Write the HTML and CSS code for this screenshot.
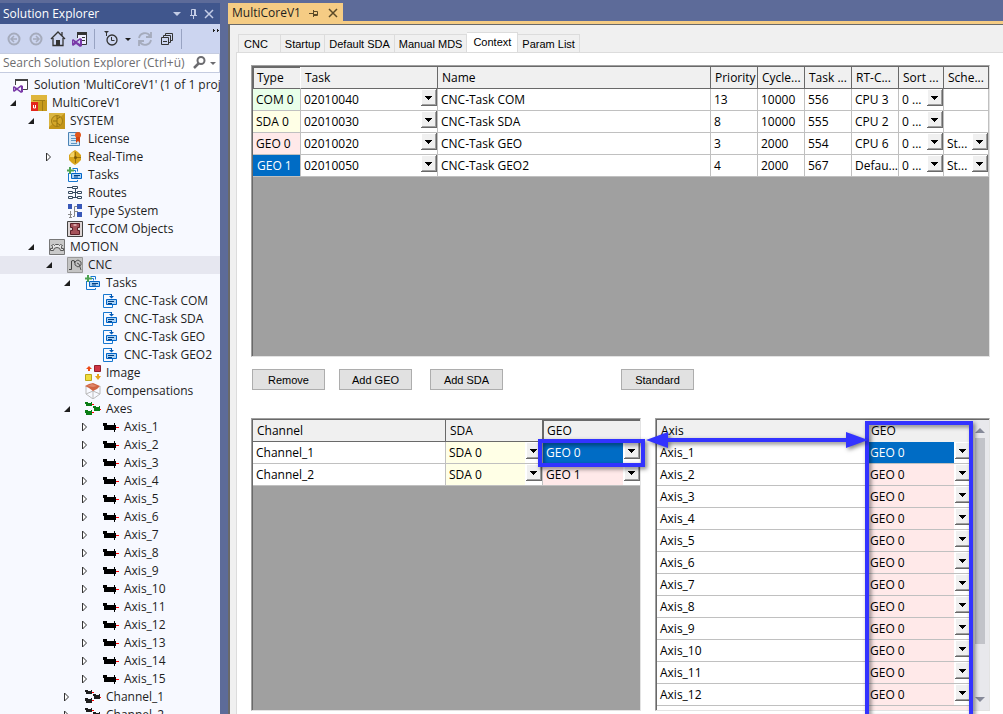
FILE: index.html
```html
<!DOCTYPE html>
<html lang="en">
<head>
<meta charset="utf-8">
<title>MultiCoreV1</title>
<link rel="stylesheet" href="styles.css">
</head>
<body>
<svg class="defs" aria-hidden="true">
  <symbol id="solution" viewBox="0 0 16 16"><path d="M2.500 8V2.500h12v10H9" fill="#fff" stroke="#424242"/><path d="M2 2h13v2H2z" fill="#424242"/><path d="M1 9l3 2 4-3 2 1v6l-2 1-4-3-3 2-1-1v-4zM5 12l3 2v-4zM1 11v2l1-1z" fill="#7a3aa8" fill-rule="evenodd"/></symbol>
  <symbol id="project" viewBox="0 0 16 16"><path d="M0 0h16v16H0z" fill="#c79a1c"/><path d="M0 0h16v5L0 8z" fill="#dfb63c"/><path d="M2 5.500h12M11.500 6v10" stroke="#a07c14"/><path d="M0 7h7v9H0z" fill="#e4251b"/><path d="M2.500 10v3h2v-3" fill="none" stroke="#fff"/></symbol>
  <symbol id="system" viewBox="0 0 16 16"><path d="M0 0h16v16H0z" fill="#c3951a"/><path d="M0 0h16L0 14z" fill="#dbb540"/><circle cx="8" cy="8" r="5.500" fill="#d4a72a" stroke="#a07c14"/><path d="M8 3v10M8 8H4M8 6l3-2M8 10l3 2" stroke="#91700f"/></symbol>
  <symbol id="license" viewBox="0 0 16 16"><path d="M1.500 1.500h11v13h-11z" fill="#d5e8f7" stroke="#4b83b5"/><path d="M4 4.500h4M4 7.500h5M4 9.500h6M4 12.500h6" stroke="#5f96c4"/><circle cx="11" cy="4" r="3" fill="#e2561b"/><path d="M9 6h4v6l-2-2-2 2z" fill="#d24411"/></symbol>
  <symbol id="realtime" viewBox="0 0 16 16"><path d="M5 3l3-2 3 2 3 3v5l-3 3-3 2-3-2-3-3V6z" fill="#d8a51d"/><path d="M8.500 3v11M8 8.500h6" stroke="#9b720b"/><path d="M3 8a5 5 0 0 1 4-5v5z" fill="#f3d36a"/><circle cx="8.500" cy="8.500" r="1.500" fill="#7a5908"/></symbol>
  <symbol id="tasks" viewBox="0 0 16 16"><path d="M5.500 1.500h5v3M1.500 6v8.500h9V13" fill="none" stroke="#1878d0"/><path d="M3.500 3.500h5v2" fill="none" stroke="#1878d0"/><path d="M4.500 6.500h10v5h-10z" fill="#a9d1f5" stroke="#0065c8"/><path d="M7 8.500h6M7 10h4" stroke="#003f83"/><path d="M3 0v7M0 3.500h7" stroke="#4ca352" stroke-width="2"/></symbol>
  <symbol id="task" viewBox="0 0 16 16"><path d="M6 1.500H.5v13h9V12M6 1.500h3" fill="none" stroke="#1878d0"/><path d="M3.500 6.500h10v5h-10z" fill="#a9d1f5" stroke="#0065c8"/><path d="M5 8.500h6M5 10.500h4" stroke="#003f83"/><path d="M6 3h5L8.500 5.500zM8 1h1v3H8z" fill="#0058b5"/></symbol>
  <symbol id="routes" viewBox="0 0 16 16"><path d="M5.500 1.500h5v2h-5zM1.500 6.500h4v2h-4zM10.500 6.500h4v2h-4zM1.500 11.500h4v2h-4zM10.500 11.500h4v2h-4z" fill="#fff" stroke="#34495e"/><path d="M8.500 4v9M6 7.500h5M6 12.500h5M0 2.500h5" stroke="#34495e" fill="none"/></symbol>
  <symbol id="types" viewBox="0 0 16 16"><path d="M1 1h4v5H1zM10 1h5v5h-5zM10 9h5v5h-5z" fill="#3858b8"/><path d="M10 3.500H7.500v10H6M8 8.500h3M3.500 8v6M1 11.500h4M2 14.500h3" stroke="#888" fill="none"/></symbol>
  <symbol id="tccom" viewBox="0 0 16 16"><path d="M.5.5h15v15H.5z" fill="#ddd5d5" stroke="#444"/><path d="M3.500 2.500h9v4h-2v3h2v4h-9v-4h2v-3h-2z" fill="#a5525a" stroke="#5a1f27"/><path d="M6.500 3v2h3V3" fill="#d9a6a9"/></symbol>
  <symbol id="motion" viewBox="0 0 16 16"><path d="M.5.5h15v15H.5z" fill="#c9c9c9" stroke="#777"/><path d="M1.500 11.500v-2h2v-2l-1-1 2-1 1 1 1-1h3l1 1 1-1 2 1-1 1v2h2v2h-3a3.500 3 0 0 0-7 0z" fill="#e5e5e5" stroke="#555"/></symbol>
  <symbol id="cnc" viewBox="0 0 16 16"><path d="M.5.5h15v15H.5z" fill="#c4c4c4" stroke="#999"/><path d="M2 12.500h2.500V4L6 3.500 7.500 4v2" fill="none" stroke="#444"/><path d="M9 4l2-1 3 2v3l-3 2-3-2V5zM10 6l2 1 2 6" fill="none" stroke="#555"/></symbol>
  <symbol id="image" viewBox="0 0 16 16"><path d="M4 1l3 3H5v2H3V4H1z" fill="#ed4a16"/><path d="M9.500.5h6v6h-6z" fill="#cf3444" stroke="#93202c"/><path d="M.5 9.500h6v6h-6z" fill="#f0dc3c" stroke="#bda619"/><path d="M12 9h2v2h2l-3 4-3-4h2z" fill="#e8a21c"/></symbol>
  <symbol id="comp" viewBox="0 0 16 16"><path d="M1 3v8l7 5 7-5V3M8 8v8M1 11l7-3 7 3" fill="none" stroke="#bbb"/><path d="M0 3l4-2 4-1 7 3-3 3-4 2-4-3z" fill="#cf6443"/><path d="M2 3l5-2 5 2-4 1z" fill="#e0886c"/></symbol>
  <symbol id="motors" viewBox="0 0 16 16"><g shape-rendering="crispEdges"><path d="M0 1h3v1h3V1h1v4H1V3H0zM0 9h3v1h3V9h1v5H1v-2H0zM8 5h3v1h3V5h1v5H9V7H8z" fill="currentColor"/><path d="M7 3h2v1H7zM7 11h2v1H7zM15 8h1v1h-1z" fill="red"/></g></symbol>
  <symbol id="axis" viewBox="0 0 16 16"><g shape-rendering="crispEdges"><path d="M0 4h4v2h7V4h1v2h1v5h-1v2h-1v-2H1V7H0z" fill="#000"/><path d="M13 8h3v1h-3z" fill="red"/></g></symbol>
  <symbol id="open" viewBox="0 0 10 10"><path d="M8 2v6H2z" fill="#1e1e1e"/></symbol>
  <symbol id="closed" viewBox="0 0 10 10"><path d="M2.500 1v8l4-4z" fill="#fff" stroke="#333"/></symbol>
  <symbol id="pin" viewBox="0 0 12 12"><path d="M3 7.500h7M4.500 7V1.500h4V7M7.500 1v6M6.500 7v4" fill="none" stroke="currentColor"/></symbol>
  <symbol id="cross" viewBox="0 0 12 12"><path d="M2 2l8 8M10 2l-8 8" stroke="currentColor" stroke-width="1.500"/></symbol>
</svg>
<aside class="explorer">
  <header class="titlebar"><h1>Solution Explorer</h1>
    <button aria-label="Window options"><svg viewBox="0 0 12 12"><path d="M2 4h8L6 8z" fill="currentColor"/></svg></button>
    <button aria-label="Auto hide"><svg><use href="#pin"/></svg></button>
    <button aria-label="Close explorer"><svg><use href="#cross"/></svg></button>
  </header>
  <div class="toolbar">
    <button aria-label="Back"><svg viewBox="0 0 16 16"><circle cx="8" cy="8" r="5.500" fill="none" stroke="#a5abbc" stroke-width="2"/><path d="M11 8H5M8 5L5 8l3 3" fill="none" stroke="#a5abbc" stroke-width="1.500"/></svg></button>
    <button aria-label="Forward"><svg viewBox="0 0 16 16"><circle cx="8" cy="8" r="5.500" fill="none" stroke="#a5abbc" stroke-width="2"/><path d="M5 8h6M8 5l3 3-3 3" fill="none" stroke="#a5abbc" stroke-width="1.500"/></svg></button>
    <button aria-label="Home"><svg viewBox="0 0 16 16"><path d="M1 8l7-7 7 7M3 7v7.500h10V7M12 5V1" fill="none" stroke="#333" stroke-width="1.300"/><path d="M6 9h4v6H6z" fill="#333"/></svg></button>
    <button aria-label="Switch views"><svg viewBox="0 0 16 16"><path d="M5.500 7V1.500h9v12H10" fill="#eef" stroke="#333"/><path d="M5 1h10v3H5zM10 6h3v1h-3zM10 9h3v1h-3z" fill="#333"/><path d="M1 8l3 2 4-3 2 1v7l-2 1-4-3-3 2-1-1V9zM5 11l3 2V9zM1 10v2l1-1z" fill="#7a3aa8" fill-rule="evenodd"/></svg></button>
    <i class="sep"></i>
    <button class="filter" aria-label="Pending changes filter"><svg viewBox="0 0 16 16"><circle cx="9" cy="9" r="5" fill="none" stroke="#333" stroke-width="1.300"/><path d="M8.500 6v3.500h3" fill="none" stroke="#333"/><path d="M1 0h5L4 2v3H3V2z" fill="#333"/></svg></button>
    <button class="slim" aria-label="Filter options"><svg viewBox="0 0 6 16"><path d="M0 7h6L3 10z" fill="#1e1e1e"/></svg></button>
    <button aria-label="Sync"><svg viewBox="0 0 16 16"><path d="M2 7a6 6 0 0 1 11-2M14 9a6 6 0 0 1-11 2M14 1v5H9M2 15v-5h5" fill="none" stroke="#a5abbc" stroke-width="1.800"/></svg></button>
    <button aria-label="Collapse all"><svg viewBox="0 0 16 16"><path d="M2.500 6.500h7v7h-7zM4 10.500h4M4.500 6V4.500h7v7H10M6.500 4V2.500h7v7H12" fill="none" stroke="#333"/></svg></button>
    <i class="sep"></i>
    <button class="more" aria-label="More tools"><svg viewBox="0 0 8 16"><path d="M1 1h1v3H1zM5 1h1v3H5zM2 2h1v1H2zM6 2h1v1H6z" fill="#1e1e1e"/></svg></button>
  </div>
  <div class="search"><input type="text" aria-label="Search Solution Explorer" placeholder="Search Solution Explorer (Ctrl+ü)">
    <button aria-label="Search"><svg viewBox="0 0 16 16"><circle cx="10" cy="5.500" r="3.500" fill="none" stroke="#6c6c70" stroke-width="2"/><path d="M7.500 8.500L3 13" stroke="#6c6c70" stroke-width="2.500"/></svg></button>
    <button class="slim" aria-label="Search options"><svg viewBox="0 0 6 16"><path d="M0 7h6L3 10z" fill="#6c6c70"/></svg></button>
  </div>
  <ul class="tree">
    <li class="root"><svg class="ico"><use href="#solution"/></svg>Solution 'MultiCoreV1' (1 of 1 project)</li>
    <li class="l1"><svg class="exp"><use href="#open"/></svg><svg class="ico"><use href="#project"/></svg>MultiCoreV1</li>
    <li class="l2"><svg class="exp"><use href="#open"/></svg><svg class="ico"><use href="#system"/></svg>SYSTEM</li>
    <li class="l3"><i class="exp"></i><svg class="ico"><use href="#license"/></svg>License</li>
    <li class="l3"><svg class="exp"><use href="#closed"/></svg><svg class="ico"><use href="#realtime"/></svg>Real-Time</li>
    <li class="l3"><i class="exp"></i><svg class="ico"><use href="#tasks"/></svg>Tasks</li>
    <li class="l3"><i class="exp"></i><svg class="ico"><use href="#routes"/></svg>Routes</li>
    <li class="l3"><i class="exp"></i><svg class="ico"><use href="#types"/></svg>Type System</li>
    <li class="l3"><i class="exp"></i><svg class="ico"><use href="#tccom"/></svg>TcCOM Objects</li>
    <li class="l2"><svg class="exp"><use href="#open"/></svg><svg class="ico"><use href="#motion"/></svg>MOTION</li>
    <li class="l3 current"><svg class="exp"><use href="#open"/></svg><svg class="ico"><use href="#cnc"/></svg>CNC</li>
    <li class="l4"><svg class="exp"><use href="#open"/></svg><svg class="ico"><use href="#tasks"/></svg>Tasks</li>
    <li class="l5"><i class="exp"></i><svg class="ico"><use href="#task"/></svg>CNC-Task COM</li>
    <li class="l5"><i class="exp"></i><svg class="ico"><use href="#task"/></svg>CNC-Task SDA</li>
    <li class="l5"><i class="exp"></i><svg class="ico"><use href="#task"/></svg>CNC-Task GEO</li>
    <li class="l5"><i class="exp"></i><svg class="ico"><use href="#task"/></svg>CNC-Task GEO2</li>
    <li class="l4"><i class="exp"></i><svg class="ico"><use href="#image"/></svg>Image</li>
    <li class="l4"><i class="exp"></i><svg class="ico"><use href="#comp"/></svg>Compensations</li>
    <li class="l4"><svg class="exp"><use href="#open"/></svg><svg class="ico green"><use href="#motors"/></svg>Axes</li>
    <li class="l5"><svg class="exp"><use href="#closed"/></svg><svg class="ico"><use href="#axis"/></svg>Axis_1</li>
    <li class="l5"><svg class="exp"><use href="#closed"/></svg><svg class="ico"><use href="#axis"/></svg>Axis_2</li>
    <li class="l5"><svg class="exp"><use href="#closed"/></svg><svg class="ico"><use href="#axis"/></svg>Axis_3</li>
    <li class="l5"><svg class="exp"><use href="#closed"/></svg><svg class="ico"><use href="#axis"/></svg>Axis_4</li>
    <li class="l5"><svg class="exp"><use href="#closed"/></svg><svg class="ico"><use href="#axis"/></svg>Axis_5</li>
    <li class="l5"><svg class="exp"><use href="#closed"/></svg><svg class="ico"><use href="#axis"/></svg>Axis_6</li>
    <li class="l5"><svg class="exp"><use href="#closed"/></svg><svg class="ico"><use href="#axis"/></svg>Axis_7</li>
    <li class="l5"><svg class="exp"><use href="#closed"/></svg><svg class="ico"><use href="#axis"/></svg>Axis_8</li>
    <li class="l5"><svg class="exp"><use href="#closed"/></svg><svg class="ico"><use href="#axis"/></svg>Axis_9</li>
    <li class="l5"><svg class="exp"><use href="#closed"/></svg><svg class="ico"><use href="#axis"/></svg>Axis_10</li>
    <li class="l5"><svg class="exp"><use href="#closed"/></svg><svg class="ico"><use href="#axis"/></svg>Axis_11</li>
    <li class="l5"><svg class="exp"><use href="#closed"/></svg><svg class="ico"><use href="#axis"/></svg>Axis_12</li>
    <li class="l5"><svg class="exp"><use href="#closed"/></svg><svg class="ico"><use href="#axis"/></svg>Axis_13</li>
    <li class="l5"><svg class="exp"><use href="#closed"/></svg><svg class="ico"><use href="#axis"/></svg>Axis_14</li>
    <li class="l5"><svg class="exp"><use href="#closed"/></svg><svg class="ico"><use href="#axis"/></svg>Axis_15</li>
    <li class="l4"><svg class="exp"><use href="#closed"/></svg><svg class="ico"><use href="#motors"/></svg>Channel_1</li>
    <li class="l4"><svg class="exp"><use href="#closed"/></svg><svg class="ico"><use href="#motors"/></svg>Channel_2</li>
  </ul>
</aside>
<main class="document">
  <div class="doc-tab"><span>MultiCoreV1</span><button aria-label="Pin tab"><svg viewBox="0 0 12 12"><path d="M1 6.500h4M5.500 3v7M5 4.500h4.500v4H5M5 7.500h5" fill="none" stroke="currentColor"/></svg></button><button aria-label="Close tab"><svg><use href="#cross"/></svg></button></div>
  <div class="editor">
    <nav class="tabs">
      <button class="tab-first">CNC</button><button>Startup</button><button>Default SDA</button><button>Manual MDS</button><button class="active">Context</button><button>Param List</button>
    </nav>
    <div class="page">
      <section class="grid-box tasks">
        <table>
          <colgroup><col class="c-type"><col class="c-task"><col><col class="c-num"><col class="c-num"><col class="c-num"><col class="c-num"><col class="c-drop"><col class="c-drop"></colgroup>
          <thead><tr><th class="pressed">Type</th><th>Task</th><th>Name</th><th>Priority</th><th>Cycle...</th><th>Task ...</th><th>RT-C...</th><th>Sort ...</th><th>Sche...</th></tr></thead>
          <tbody>
            <tr><td class="com">COM 0</td><td class="pick"><select aria-label="Task of COM 0"><option>02010040</option></select></td><td>CNC-Task COM</td><td>13</td><td>10000</td><td>556</td><td>CPU 3</td><td class="pick"><select aria-label="Sort order of COM 0"><option>0 ...</option></select></td><td></td></tr>
            <tr><td class="sda">SDA 0</td><td class="pick"><select aria-label="Task of SDA 0"><option>02010030</option></select></td><td>CNC-Task SDA</td><td>8</td><td>10000</td><td>555</td><td>CPU 2</td><td class="pick"><select aria-label="Sort order of SDA 0"><option>0 ...</option></select></td><td></td></tr>
            <tr><td class="geo">GEO 0</td><td class="pick"><select aria-label="Task of GEO 0"><option>02010020</option></select></td><td>CNC-Task GEO</td><td>3</td><td>2000</td><td>554</td><td>CPU 6</td><td class="pick"><select aria-label="Sort order of GEO 0"><option>0 ...</option></select></td><td class="pick"><select aria-label="Schedule of GEO 0"><option>St...</option></select></td></tr>
            <tr><td class="selected">GEO 1</td><td class="pick"><select aria-label="Task of GEO 1"><option>02010050</option></select></td><td>CNC-Task GEO2</td><td>4</td><td>2000</td><td>567</td><td>Defau...</td><td class="pick"><select aria-label="Sort order of GEO 1"><option>0 ...</option></select></td><td class="pick"><select aria-label="Schedule of GEO 1"><option>St...</option></select></td></tr>
          </tbody>
        </table>
      </section>
      <div class="actions"><button>Remove</button><button>Add GEO</button><button class="add-sda">Add SDA</button><button class="standard">Standard</button></div>
      <div class="mapping">
        <div class="channels">
          <section class="grid-box">
            <table>
              <colgroup><col><col class="c-geo"><col class="c-geo"></colgroup>
              <thead><tr><th>Channel</th><th>SDA</th><th class="pressed">GEO</th></tr></thead>
              <tbody>
                <tr><td>Channel_1</td><td class="pick sda"><select aria-label="SDA of Channel_1"><option>SDA 0</option></select></td><td class="pick selected"><select aria-label="GEO of Channel_1"><option>GEO 0</option></select></td></tr>
                <tr><td>Channel_2</td><td class="pick sda"><select aria-label="SDA of Channel_2"><option>SDA 0</option></select></td><td class="pick geo"><select aria-label="GEO of Channel_2"><option>GEO 1</option></select></td></tr>
              </tbody>
            </table>
          </section>
          <div class="mark mark-cell"></div>
        </div>
        <div class="axes">
          <section class="grid-box">
            <table>
              <colgroup><col><col class="c-axis"></colgroup>
              <thead><tr><th>Axis</th><th>GEO</th></tr></thead>
              <tbody>
                <tr><td>Axis_1</td><td class="pick selected"><select aria-label="GEO of Axis_1"><option>GEO 0</option></select></td></tr>
                <tr><td>Axis_2</td><td class="pick geo"><select aria-label="GEO of Axis_2"><option>GEO 0</option></select></td></tr>
                <tr><td>Axis_3</td><td class="pick geo"><select aria-label="GEO of Axis_3"><option>GEO 0</option></select></td></tr>
                <tr><td>Axis_4</td><td class="pick geo"><select aria-label="GEO of Axis_4"><option>GEO 0</option></select></td></tr>
                <tr><td>Axis_5</td><td class="pick geo"><select aria-label="GEO of Axis_5"><option>GEO 0</option></select></td></tr>
                <tr><td>Axis_6</td><td class="pick geo"><select aria-label="GEO of Axis_6"><option>GEO 0</option></select></td></tr>
                <tr><td>Axis_7</td><td class="pick geo"><select aria-label="GEO of Axis_7"><option>GEO 0</option></select></td></tr>
                <tr><td>Axis_8</td><td class="pick geo"><select aria-label="GEO of Axis_8"><option>GEO 0</option></select></td></tr>
                <tr><td>Axis_9</td><td class="pick geo"><select aria-label="GEO of Axis_9"><option>GEO 0</option></select></td></tr>
                <tr><td>Axis_10</td><td class="pick geo"><select aria-label="GEO of Axis_10"><option>GEO 0</option></select></td></tr>
                <tr><td>Axis_11</td><td class="pick geo"><select aria-label="GEO of Axis_11"><option>GEO 0</option></select></td></tr>
                <tr><td>Axis_12</td><td class="pick geo"><select aria-label="GEO of Axis_12"><option>GEO 0</option></select></td></tr>
                <tr><td></td><td class="geo"></td></tr>
              </tbody>
            </table>
            <div class="scrollbar"><svg viewBox="0 0 16 16"><path d="M3 11h10L8 6z" fill="#868999"/></svg><i class="thumb"></i><svg viewBox="0 0 16 16"><path d="M3 5h10l-5 5z" fill="#868999"/></svg></div>
          </section>
          <div class="mark mark-column"></div>
          <div class="arrow"><svg viewBox="0 0 22 16"><path d="M22 0v16L0 8z" fill="#33f"/></svg><i></i><svg viewBox="0 0 22 16"><path d="M0 0v16l22-8z" fill="#33f"/></svg></div>
        </div>
      </div>
    </div>
  </div>
</main>
</body>
</html>
```
FILE: styles.css
```css
* { box-sizing: border-box; }
body {
  margin: 0;
  height: 100vh;
  overflow: hidden;
  display: flex;
  gap: 8px;
  background: #5d6b99;
  color: #000;
  font: 12px/18px "Open Sans", "Noto Sans", sans-serif;
}
button, input, select { font: inherit; color: inherit; margin: 0; border-radius: 0; }
svg { display: block; flex: none; }
.defs { position: absolute; width: 0; height: 0; }

/* Solution explorer */
.explorer { width: 220px; flex: none; padding-top: 3px; display: flex; flex-direction: column; }
.titlebar { height: 21px; flex: none; padding: 0 3px; display: flex; align-items: center; gap: 2px; background: #40568d; color: #fff; }
.titlebar h1 { flex: 1; margin: 0; font-size: 12px; font-weight: 400; }
.titlebar button, .toolbar button, .search button, .doc-tab button { padding: 0; border: 0; background: none; }
.titlebar button { width: 14px; color: #c3cce6; }
.titlebar svg { width: 12px; height: 12px; }
.toolbar { height: 29px; flex: none; display: flex; align-items: center; gap: 6px; padding-left: 6px; background: #ccd5f0; }
.toolbar svg, .search svg { width: 16px; height: 16px; }
.toolbar .slim svg, .search .slim svg { width: 6px; }
.toolbar .filter { margin-left: 2px; }
.toolbar .more { align-self: flex-start; margin-left: auto; padding: 4px 0 0; }
.toolbar .more svg { width: 8px; }
.toolbar .sep { width: 1px; height: 20px; background: #98a3c2; }
.search { height: 20px; flex: none; display: flex; align-items: center; padding-right: 3px; gap: 3px; background: #fff; border: 1px solid #c5cce0; border-width: 1px 1px 1px 0; }
.search input { flex: 1; min-width: 0; padding: 0 0 0 3px; border: 0; background: none; outline: 0; }
.search input::placeholder { color: #6d6d70; opacity: 1; }
.tree { flex: 1; min-height: 0; overflow: hidden; margin: 0; padding: 3px 0 0; list-style: none; background: #f7f9ff; color: #1e1e1e; }
.tree li { height: 18px; display: flex; align-items: center; white-space: nowrap; overflow: hidden; }
.tree .root { padding-left: 13px; }
.l1 { padding-left: 8px; }
.l2 { padding-left: 26px; }
.l3 { padding-left: 44px; }
.l4 { padding-left: 62px; }
.l5 { padding-left: 80px; }
.tree .current { background: #e6e7f0; }
.exp { width: 10px; height: 10px; flex: none; margin-right: 13px; }
.ico { width: 16px; height: 16px; margin-right: 5px; }
.green { color: #0a7d14; }

/* Document window */
.document { flex: 1; min-width: 0; display: flex; flex-direction: column; padding-top: 3px; }
.doc-tab { align-self: flex-start; height: 18px; display: flex; align-items: center; gap: 7px; padding: 2px 4px 0; background: #f5cc84; color: #1e1e1e; }
.doc-tab button { color: #5b4a28; }
.doc-tab svg { width: 12px; height: 12px; }
.editor { flex: 1; min-height: 0; display: flex; flex-direction: column; border-top: 3px solid #f5cc84; background: #f0f0f0; box-shadow: inset 2px 1px 0 #696969; padding-left: 8px; }
.tabs { height: 28px; flex: none; display: flex; align-items: flex-end; padding-left: 2px; font: 11px/16px "Liberation Sans", Arial, sans-serif; }
.tabs button { height: 18px; padding: 0 4px; border: 1px solid #dcdcdc; border-width: 1px 1px 0 0; background: #f0f0f0; white-space: nowrap; }
.tabs .tab-first { border-left-width: 1px; padding: 0 12px 0 5px; }
.tabs .active { height: 20px; background: #fff; padding: 0 6px 2px; }
.page { flex: 1; min-height: 0; display: flex; flex-direction: column; padding: 12px 13px 3px 14px; background: #fff; border: 1px solid #dcdcdc; border-width: 1px 0 0 1px; }
.grid-box { position: relative; overflow: hidden; background: #a0a0a0; border: 1px solid #a0a0a0; border-right-color: #e3e3e3; border-bottom-color: #e3e3e3; box-shadow: inset 1px 1px 0 #696969; padding: 1px 0 0 1px; }
.tasks { height: 292px; flex: none; }

table { width: 100%; table-layout: fixed; border-spacing: 0; }
th, td { height: 22px; padding: 0 3px; line-height: 20px; text-align: left; font-weight: 400; white-space: nowrap; overflow: hidden; border-right: 1px solid #c0c0c0; border-bottom: 1px solid #c0c0c0; background: #fff; }
th { background: #f0f0f0; padding: 0 4px; border-color: #696969; }
.pressed { box-shadow: inset 1px 1px 0 #696969; border-right-color: #fff; }
td.pick { padding: 0; }
.com { background: #e9ffe9; }
.sda { background: #ffffe6; }
.geo { background: #ffe9e9; }
.selected { background: #006cc5; color: #fff; padding-left: 4px; }
.c-type { width: 48px; }
.c-task { width: 137px; }
.c-num { width: 47px; }
.c-drop { width: 45px; }
.c-geo { width: 97px; }
.c-axis { width: 104px; }
select {
  display: block;
  width: 100%;
  height: 21px;
  padding: 0 17px 0 3px;
  border: 0;
  outline: 0;
  appearance: none;
  background: url("data:image/svg+xml,%3Csvg xmlns='http://www.w3.org/2000/svg' width='17' height='21'%3E%3Cpath fill='%23fff' d='M0 0h17v21H0z'/%3E%3Cpath fill='%23696969' d='M1 0h16v17H1z'/%3E%3Cpath fill='%23fff' d='M1 0h15v16H1z'/%3E%3Cpath fill='%23a0a0a0' d='M2 1h14v15H2z'/%3E%3Cpath fill='%23f0f0f0' d='M2 1h13v14H2z'/%3E%3Cpath d='M5 7h7v1h-1v1h-1v1H9v1H8v-1H7V9H6V8H5z'/%3E%3C/svg%3E") right top no-repeat;
}
.channels tr > :last-child, .axes tr > :last-child { border-right: 0; }

/* Buttons between the grids */
.actions { flex: none; display: flex; gap: 14px; padding: 12px 1px 28px; font: 11px/16px "Liberation Sans", Arial, sans-serif; }
.actions button { width: 73px; height: 21px; padding: 0; border: 1px solid #adadad; background: #e1e1e1; }
.actions .add-sda { margin-left: 4px; }
.actions .standard { margin-left: 104px; }

/* Channel and axis grids */
.mapping { flex: 1; min-height: 0; display: flex; gap: 14px; }
.channels { position: relative; flex: 390; min-width: 0; display: flex; }
.axes { position: relative; flex: 335; min-width: 0; display: flex; }
.mapping .grid-box { flex: 1; min-width: 0; }
.axes .grid-box { display: flex; align-items: stretch; }
.axes table { flex: 1; width: auto; align-self: flex-start; }
.axes th { border-color: #f0f0f0; }
.scrollbar { width: 18px; flex: none; display: flex; flex-direction: column; align-items: center; padding: 2px 0; background: #e8e8ec; }
.scrollbar svg { width: 16px; height: 16px; }
.thumb { width: 10px; flex: 208; background: #c2c3c9; }
.scrollbar svg:last-child { margin-top: 48px; }

/* Callouts drawn over the grids */
.mark { position: absolute; border: 4px solid #33f; filter: drop-shadow(2px 2px 2px rgba(0, 0, 0, .5)); pointer-events: none; }
.mark-cell { top: 21px; right: -4px; width: 107px; height: 28px; }
.mark-column { top: 3px; right: 17px; bottom: -8px; width: 108px; }
.arrow { position: absolute; top: 14px; left: -9px; right: 122px; display: flex; align-items: center; filter: drop-shadow(2px 2px 2px rgba(0, 0, 0, .5)); pointer-events: none; }
.arrow svg { width: 22px; height: 16px; }
.arrow i { flex: 1; height: 4px; background: #33f; }
```
